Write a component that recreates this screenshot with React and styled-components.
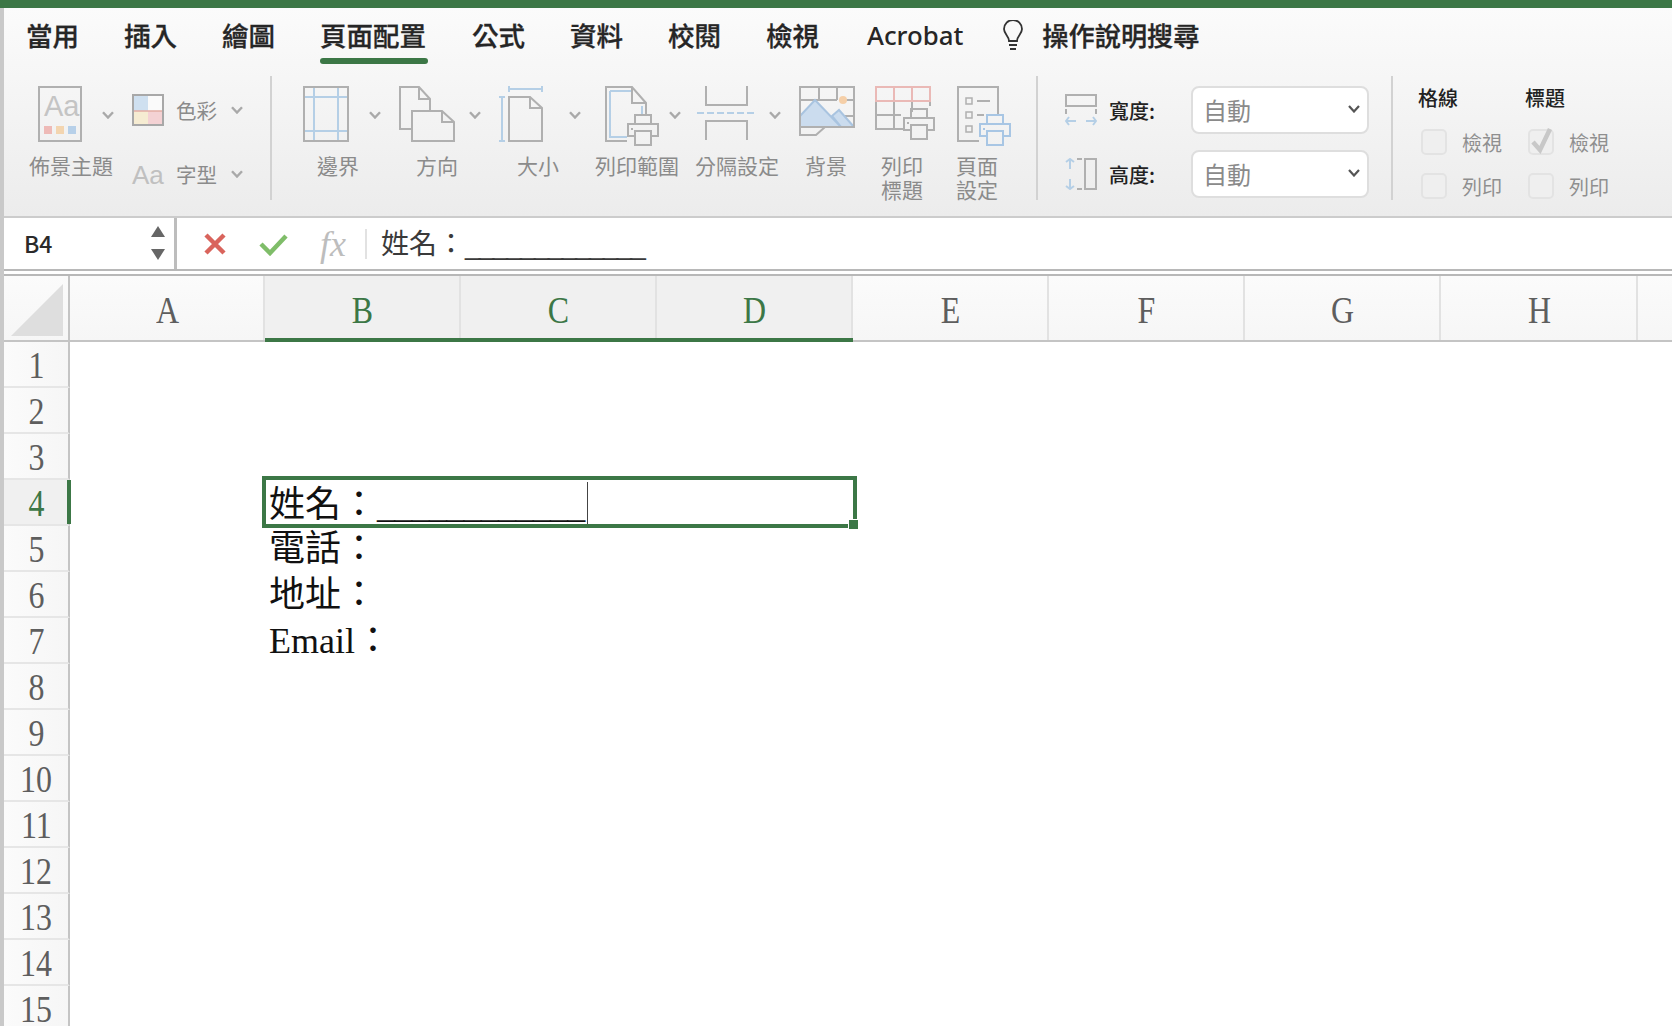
import React from 'react';
import styled, { createGlobalStyle } from 'styled-components';

const GREEN = '#3c7746';
const GRAY = '#b0b0b0';
const BLUE = '#b5cfe6';
const CJK = '"Noto Sans CJK TC", "Noto Sans", sans-serif';
const SERIF = '"Liberation Serif", "Noto Sans CJK TC", serif';

const Global = createGlobalStyle`
  html, body { margin: 0; padding: 0; background: #fff; }
  * { box-sizing: border-box; }
`;

const Page = styled.div`
  width: 1672px; height: 1026px; overflow: hidden; display: flex; flex-direction: column;
  background: #fff; font-family: ${CJK};
`;
const TopBar = styled.div`height: 8px; background: ${GREEN}; flex: none;`;
const Main = styled.div`flex: 1; min-height: 0; border-left: 4px solid #c9c9c9; display: flex; flex-direction: column;`;

const Ribbon = styled.div`
  height: 210px; flex: none; background: linear-gradient(#fbfbfb, #ececec); border-bottom: 2px solid #cccccc;
`;
const Tabs = styled.div`height: 62px; display: flex; align-items: center; padding: 0 0 8px 22px;`;
const Tab = styled.div`
  position: relative; font-size: 26.5px; font-weight: 500; color: #262626; line-height: 34px;
  -webkit-text-stroke: .3px #262626;
  margin-right: ${p => p.$gap ?? 45}px; white-space: nowrap;
  ${p => p.$active && `
    &::after { content: ''; position: absolute; left: 0; right: -2px; top: 40px; height: 6px; border-radius: 3px; background: ${GREEN}; }
  `}
`;
const AcrobatTab = styled(Tab)`font-family: "Noto Sans", sans-serif; font-size: 25.8px; -webkit-text-stroke: 0;`;
const HelpTab = styled(Tab)`font-size: 26.2px;`;
const Bulb = styled.svg`width: 24px; height: 30px; margin-right: 17px; flex: none;`;

const Body = styled.div`height: 146px; display: flex; align-items: flex-start;`;
const Divider = styled.div`
  width: 2px; height: 124px; margin-top: 6px; margin-left: ${p => p.$left}px; background: #d2d2d2; flex: none;
`;
const Tool = styled.div`
  width: ${p => p.$w}px; margin-left: ${p => p.$left || 0}px; margin-top: 16px; flex: none; display: flex; flex-direction: column;
`;
const IconRow = styled.div`
  height: 60px; display: flex; align-items: flex-start; padding-left: ${p => p.$inset || 0}px; white-space: nowrap;
`;
const Chevron = styled.svg`
  width: 12px; height: 8px; flex: none; margin-left: ${p => p.$gap || 0}px; margin-top: ${p => p.$top ?? 25}px;
`;
const ToolLabel = styled.div`
  margin-top: 7px; font-size: 21px; line-height: 24px; color: #8b8b8b; text-align: center; white-space: nowrap;
`;
const SideStack = styled.div`
  width: 115px; margin-left: ${p => p.$left}px; margin-top: 24px; flex: none; display: flex; flex-direction: column; gap: 32px;
`;
const SideRow = styled.div`height: 32px; display: flex; align-items: center;`;
const SideLabel = styled.div`margin-left: 12px; font-size: 20.5px; color: #8b8b8b; white-space: nowrap; width: 42px;`;
const FontAa = styled.div`
  width: 32px; font: 26px/32px "Liberation Sans", sans-serif; color: #c0c0c0; white-space: nowrap; padding-top: 2px;
`;

const SizeGroup = styled.div`
  margin-left: 27px; margin-top: 16px; flex: none; display: flex; flex-direction: column; gap: 16px;
`;
const SizeRow = styled.div`height: 48px; display: flex; align-items: center;`;
const SizeLabel = styled.div`
  width: 82px; margin-left: 12px; font-size: 20px; font-weight: 500; color: #222; white-space: nowrap;
`;
const Select = styled.div`
  width: 178px; height: 48px; background: #fff; border: 2px solid #dedede; border-radius: 8px;
  display: flex; align-items: center; justify-content: space-between; padding: 0 7px 2px 10px;
  font-size: 24px; color: #8a8a8a;
`;
const SheetChecks = styled.div`
  margin-left: 25px; margin-top: 16px; flex: none; display: grid;
  grid-template-columns: 107px 107px; grid-template-rows: 36px 44px 44px;
`;
const CheckHead = styled.div`font-size: 20px; font-weight: 500; color: #222; line-height: 28px; margin-top: -2px;`;
const CheckRow = styled.div`display: flex; align-items: center; padding-left: 3px; height: 44px; margin-top: -2px;`;
const Box = styled.div`
  position: relative; width: 26px; height: 26px; border: 2px solid #e3e3e3; border-radius: 5px; background: #efefef; flex: none;
`;
const Tick = styled.svg`position: absolute; left: 0; top: -3px; width: 24px; height: 26px;`;
const CheckLabel = styled.div`margin-left: 15px; font-size: 20px; color: #8f8f8f; white-space: nowrap;`;

const FormulaBar = styled.div`
  height: 53px; flex: none; display: flex; align-items: stretch; background: #fff; border-bottom: 2px solid #b8b8b8;
`;
const NameBox = styled.div`
  width: 173px; flex: none; border-right: 3px solid #bdbdbd; display: flex; align-items: center; justify-content: space-between;
  padding: 0 9px 2px 20px; font-size: 23px; font-weight: 500; color: #2a2a2a;
`;
const Stepper = styled.div`display: flex; flex-direction: column; gap: 12px;`;
const Arrow = styled.div`
  width: 0; height: 0; border-left: 7px solid transparent; border-right: 7px solid transparent;
  ${p => (p.$down ? 'border-top: 11px solid #666;' : 'border-bottom: 11px solid #666;')}
`;
const FormulaIcons = styled.div`
  width: 204px; flex: none; display: flex; align-items: center; padding-left: 26px;
`;
const FxLabel = styled.div`
  font: italic 36px/1 "Liberation Serif", serif; color: #bdbdbd; margin-left: 31px; width: 38px; white-space: nowrap;
`;
const FormulaSep = styled.div`width: 2px; height: 30px; background: #e2e2e2; margin-left: 7px;`;
const FormulaText = styled.div`
  font-size: 28px; color: #3a3a3a; line-height: 48px; white-space: nowrap;
`;
const FormulaLine = styled.span`font-family: "Liberation Sans", sans-serif; font-size: 28px; letter-spacing: -1.8px;`;

const Gap = styled.div`height: 3px; flex: none; background: #fff;`;

const ColHeader = styled.div`
  height: 68px; flex: none; display: flex; border-top: 2px solid #b8b8b8; border-bottom: 2px solid #c4c4c4;
  background: linear-gradient(#fbfbfb, #f6f6f6);
`;
const Corner = styled.div`
  width: 66px; flex: none; border-right: 2px solid #c4c4c4; padding: 8px 0 0 7px;
`;
const Triangle = styled.div`
  width: 52px; height: 52px; background: #dedede; clip-path: polygon(100% 0, 100% 100%, 0 100%);
`;
const Col = styled.div`
  position: relative; width: ${p => p.$w || 196}px; flex: none; display: flex; align-items: center; justify-content: center;
  font: 38px/1 ${SERIF}; color: ${p => (p.$sel ? GREEN : '#5e5e5e')};
  background: ${p => (p.$sel ? '#f0f0f0' : 'transparent')};
  border-right: 2px solid #e2e2e2;
  ${p => p.$sel && `&::after { content: ''; position: absolute; left: 0; right: -2px; bottom: -2px; height: 4px; background: ${GREEN}; }`}
`;
const Glyph = styled.span`display: inline-block; transform: scaleX(.84); padding-top: 4px; padding-left: 2px;`;

const Rows = styled.div`flex: 1; min-height: 0; overflow: hidden;`;
const Row = styled.div`position: relative; height: 46px; display: flex;`;
const RowHead = styled.div`
  position: relative; width: 66px; flex: none; display: flex; align-items: center; justify-content: center;
  font: 38px/1 ${SERIF}; color: ${p => (p.$sel ? GREEN : '#5e5e5e')};
  background: ${p => (p.$sel ? '#f0f0f0' : 'linear-gradient(90deg,#fbfbfb,#f6f6f6)')};
  border-right: 2px solid #c4c4c4; border-bottom: 2px solid #e6e6e6;
  ${p => p.$sel && `&::after { content: ''; position: absolute; right: -3px; top: 0; bottom: 0; width: 4px; background: ${GREEN}; }`}
`;
const RowGlyph = styled.span`display: inline-block; transform: scaleX(.84); padding-top: 2px;`;
const Cell = styled.div`
  padding-left: 199px; font: 36px/46px ${SERIF}; color: #111; white-space: nowrap;
`;
const EditCell = styled(Cell)`padding-top: 2px;`;
const CellLine = styled.span`letter-spacing: -.7px;`;
const Selection = styled.div`
  position: absolute; left: 258px; top: -4px; width: 595px; height: 52px; border: 4px solid ${GREEN}; pointer-events: none;
`;
const Handle = styled.div`
  position: absolute; right: -6px; bottom: -6px; width: 11px; height: 11px; background: ${GREEN}; border: 1px solid #fff;
`;
const Caret = styled.div`position: absolute; left: 583px; top: 2px; width: 1px; height: 42px; background: #444;`;

const Chev = ({ gap, top }) => (
  <Chevron $gap={gap} $top={top} viewBox="0 0 12 8" fill="none">
    <path d="M1 1.2 6 6.5 11 1.2" stroke="#a9a9a9" strokeWidth="2.4" />
  </Chevron>
);

const S = { fill: 'none', stroke: GRAY, strokeWidth: 2 };
const B = { fill: 'none', stroke: BLUE, strokeWidth: 2 };

const ThemeIcon = () => (
  <svg width="44" height="56" viewBox="0 0 44 56" style={{ flex: 'none' }}>
    <rect x="1" y="1" width="42" height="54" {...S} />
    <text x="6" y="30" fontFamily="Liberation Sans" fontSize="29" fill="#c4c4c4">Aa</text>
    <rect x="6" y="40" width="8" height="8" fill="#eebab7" />
    <rect x="18" y="40" width="8" height="8" fill="#f3d5b0" />
    <rect x="30" y="40" width="8" height="8" fill="#b7d0e9" />
  </svg>
);
const ColorIcon = () => (
  <svg width="32" height="32" viewBox="0 0 32 32" style={{ flex: 'none' }}>
    <rect x="1" y="1" width="15" height="16" fill="#cfe0f0" />
    <rect x="16" y="1" width="15" height="16" fill="#fafafa" />
    <rect x="1" y="17" width="15" height="14" fill="#f6ecd2" />
    <rect x="16" y="17" width="15" height="14" fill="#f4d2d4" />
    <path d="M1 17H31" stroke="#e3aca3" strokeWidth="1.5" />
    <rect x="1" y="1" width="30" height="30" fill="none" stroke="#a8a8a8" strokeWidth="2" />
  </svg>
);
const MarginsIcon = () => (
  <svg width="46" height="56" viewBox="0 0 46 56" style={{ flex: 'none' }}>
    <path d="M11 1V55M35 1V55M1 11H45M1 45H45" {...B} />
    <rect x="1" y="1" width="44" height="54" {...S} />
  </svg>
);
const OrientIcon = () => (
  <svg width="56" height="56" viewBox="0 0 56 56" style={{ flex: 'none' }}>
    <path d="M12 43H1V1H20L31 13V25" {...S} />
    <path d="M20 1V13H31" {...S} />
    <path d="M13 25H43L55 36V55H13Z" {...S} />
    <path d="M43 25V36H55" {...S} />
  </svg>
);
const SizeIcon = () => (
  <svg width="44" height="56" viewBox="0 0 44 56" style={{ flex: 'none' }}>
    <path d="M10 3H43M10 0V6M43 0V6M3 11V55M0 11H6M0 55H6" {...B} />
    <path d="M10 11H31L43 22V55H10Z" {...S} />
    <path d="M31 11V22H43" {...S} />
  </svg>
);
const Printer = ({ x, y, color = GRAY }) => (
  <g transform={`translate(${x} ${y})`} fill="none" stroke={color} strokeWidth="2">
    <path d="M8 10V1H24V10" />
    <path d="M8 22H1V10H31V22H24" />
    <rect x="8" y="17" width="16" height="14" />
    <path d="M4 15H6" />
  </g>
);
const PrintAreaIcon = () => (
  <svg width="54" height="60" viewBox="0 0 54 60" style={{ flex: 'none' }}>
    <path d="M22 55H1V1H27L41 17V30" {...S} />
    <path d="M27 1V17H41" {...S} />
    <path d="M5 5V51H22M5 5H26M37 20V28" {...B} />
    <Printer x={22} y={28} />
  </svg>
);
const BreaksIcon = () => (
  <svg width="58" height="54" viewBox="0 0 58 54" style={{ flex: 'none' }}>
    <path d="M9 0V19H50V0" {...S} />
    <path d="M9 54V35H50V54" {...S} />
    <path d="M0 27H58" {...B} strokeDasharray="7 3" />
  </svg>
);
const BackgroundIcon = () => (
  <svg width="56" height="50" viewBox="0 0 56 50" style={{ flex: 'none' }}>
    <path d="M20 1V14M38 1V14M1 14H38M46 30H55M47 14H55M1 41V49H17L26 41" {...S} />
    <path d="M1 30 16 14 42 41H1ZM33 30 40 24 55 41H42Z" fill="#cbdcee" stroke="#a9c4e0" strokeWidth="2" />
    <rect x="1" y="1" width="54" height="40" {...S} />
    <circle cx="44" cy="14" r="4" fill="#f5cfa8" />
  </svg>
);
const PrintTitlesIcon = () => (
  <svg width="60" height="54" viewBox="0 0 60 54" style={{ flex: 'none' }}>
    <path d="M1 15V43H28M19 15V43M37 15V26M1 29H26M55 15V20" {...S} />
    <path d="M1 1H55V15H1ZM19 1V15M37 1V15" fill="none" stroke="#eab9b6" strokeWidth="2" />
    <Printer x={28} y={22} />
  </svg>
);
const PageSetupIcon = () => (
  <svg width="54" height="60" viewBox="0 0 54 60" style={{ flex: 'none' }}>
    <path d="M22 55H1V1H41V28" {...S} />
    <path d="M9 12h6v6H9zM9 26h6v6H9zM9 40h6v6H9z" fill="none" stroke={GRAY} strokeWidth="1.5" />
    <path d="M20 15H33M20 29H27" {...S} />
    <Printer x={22} y={28} color="#a8c6e4" />
  </svg>
);
const WidthIcon = () => (
  <svg width="32" height="32" viewBox="0 0 32 32" style={{ flex: 'none' }}>
    <rect x="1" y="1" width="30" height="11" {...S} />
    <path d="M1 15V20M31 15V20" {...S} />
    <path d="M1 27H11M4 23 1 27 4 31M21 27H31M28 23 31 27 28 31" {...B} />
  </svg>
);
const HeightIcon = () => (
  <svg width="32" height="32" viewBox="0 0 32 32" style={{ flex: 'none' }}>
    <rect x="20" y="1" width="11" height="30" {...S} />
    <path d="M12 1H17M12 31H17" {...S} />
    <path d="M5 1V11M1 4 5 1 9 4M5 21V31M1 28 5 31 9 28" {...B} />
  </svg>
);
const SelChev = () => (
  <svg width="12" height="8" viewBox="0 0 12 8" fill="none"><path d="M1 1 6 6.5 11 1" stroke="#555" strokeWidth="2.2" /></svg>
);

const rows = [
  [1], [2], [3], [4, 'sel'], [5, '電話：'], [6, '地址：'], [7, 'Email：'], [8], [9], [10], [11], [12], [13], [14], [15],
];

export default function App() {
  return (
    <Page>
      <Global />
      <TopBar />
      <Main>
        <Ribbon>
          <Tabs>
            <Tab>當用</Tab>
            <Tab>插入</Tab>
            <Tab>繪圖</Tab>
            <Tab $active $gap={46}>頁面配置</Tab>
            <Tab>公式</Tab>
            <Tab>資料</Tab>
            <Tab>校閱</Tab>
            <Tab $gap={48}>檢視</Tab>
            <AcrobatTab $gap={38}>Acrobat</AcrobatTab>
            <Bulb viewBox="0 0 24 30" fill="none" stroke="#333" strokeWidth="1.8">
              <path d="M8 21C8 16 3 14 3 9a9 9 0 0 1 18 0c0 5-5 7-5 12Z" />
              <path d="M8 25H16M9 29H15" />
            </Bulb>
            <HelpTab>操作說明搜尋</HelpTab>
          </Tabs>
          <Body>
            <Tool $w={94} $left={20}>
              <IconRow $inset={14}><ThemeIcon /><Chev gap={20} /></IconRow>
              <ToolLabel>佈景主題</ToolLabel>
            </Tool>
            <SideStack $left={14}>
              <SideRow><ColorIcon /><SideLabel>色彩</SideLabel><Chev gap={13} top={0} /></SideRow>
              <SideRow><FontAa>Aa</FontAa><SideLabel>字型</SideLabel><Chev gap={13} top={0} /></SideRow>
            </SideStack>
            <Divider $left={23} />
            <Tool $w={80} $left={26}>
              <IconRow $inset={5}><MarginsIcon /><Chev gap={20} /></IconRow>
              <ToolLabel>邊界</ToolLabel>
            </Tool>
            <Tool $w={80} $left={19}>
              <IconRow $inset={2}><OrientIcon /><Chev gap={14} /></IconRow>
              <ToolLabel>方向</ToolLabel>
            </Tool>
            <Tool $w={80} $left={21}>
              <IconRow $inset={1}><SizeIcon /><Chev gap={26} /></IconRow>
              <ToolLabel>大小</ToolLabel>
            </Tool>
            <Tool $w={84} $left={17}>
              <IconRow $inset={10}><PrintAreaIcon /><Chev gap={10} /></IconRow>
              <ToolLabel>列印範圍</ToolLabel>
            </Tool>
            <Tool $w={84} $left={16}>
              <IconRow $inset={2}><BreaksIcon /><Chev gap={14} /></IconRow>
              <ToolLabel>分隔設定</ToolLabel>
            </Tool>
            <Tool $w={60} $left={17}>
              <IconRow $inset={3}><BackgroundIcon /></IconRow>
              <ToolLabel>背景</ToolLabel>
            </Tool>
            <Tool $w={60} $left={16}>
              <IconRow $inset={3}><PrintTitlesIcon /></IconRow>
              <ToolLabel>列印<br />標題</ToolLabel>
            </Tool>
            <Tool $w={60} $left={15}>
              <IconRow $inset={10}><PageSetupIcon /></IconRow>
              <ToolLabel>頁面<br />設定</ToolLabel>
            </Tool>
            <Divider $left={29} />
            <SizeGroup>
              <SizeRow><WidthIcon /><SizeLabel>寬度:</SizeLabel><Select>自動<SelChev /></Select></SizeRow>
              <SizeRow><HeightIcon /><SizeLabel>高度:</SizeLabel><Select>自動<SelChev /></Select></SizeRow>
            </SizeGroup>
            <Divider $left={22} />
            <SheetChecks>
              <CheckHead>格線</CheckHead>
              <CheckHead>標題</CheckHead>
              <CheckRow><Box /><CheckLabel>檢視</CheckLabel></CheckRow>
              <CheckRow>
                <Box>
                  <Tick viewBox="0 0 24 26" fill="none"><path d="M3 14 10 22 20 1" stroke="#c8c8c8" strokeWidth="4.5" /></Tick>
                </Box>
                <CheckLabel>檢視</CheckLabel>
              </CheckRow>
              <CheckRow><Box /><CheckLabel>列印</CheckLabel></CheckRow>
              <CheckRow><Box /><CheckLabel>列印</CheckLabel></CheckRow>
            </SheetChecks>
          </Body>
        </Ribbon>
        <FormulaBar>
          <NameBox>
            B4
            <Stepper><Arrow /><Arrow $down /></Stepper>
          </NameBox>
          <FormulaIcons>
            <svg width="24" height="24" viewBox="0 0 24 24"><path d="M3 3 21 21M21 3 3 21" stroke="#d9645c" strokeWidth="4.5" /></svg>
            <svg width="30" height="24" viewBox="0 0 30 24" style={{ marginLeft: 32 }} fill="none"><path d="M2 12 11 21 27 4" stroke="#7fbd69" strokeWidth="4.5" /></svg>
            <FxLabel>fx</FxLabel>
            <FormulaSep />
          </FormulaIcons>
          <FormulaText>姓名：<FormulaLine>_____________</FormulaLine></FormulaText>
        </FormulaBar>
        <Gap />
        <ColHeader>
          <Corner><Triangle /></Corner>
          <Col $w={195}><Glyph>A</Glyph></Col>
          <Col $sel><Glyph>B</Glyph></Col>
          <Col $sel><Glyph>C</Glyph></Col>
          <Col $sel><Glyph>D</Glyph></Col>
          <Col><Glyph>E</Glyph></Col>
          <Col><Glyph>F</Glyph></Col>
          <Col><Glyph>G</Glyph></Col>
          <Col $w={197}><Glyph>H</Glyph></Col>
        </ColHeader>
        <Rows>
          {rows.map(([n, text]) => (
            <Row key={n}>
              <RowHead $sel={text === 'sel'}><RowGlyph>{n}</RowGlyph></RowHead>
              {text === 'sel' ? (
                <>
                  <EditCell>姓名：<CellLine>____________</CellLine></EditCell>
                  <Caret />
                  <Selection><Handle /></Selection>
                </>
              ) : (
                text && <Cell>{text}</Cell>
              )}
            </Row>
          ))}
        </Rows>
      </Main>
    </Page>
  );
}
